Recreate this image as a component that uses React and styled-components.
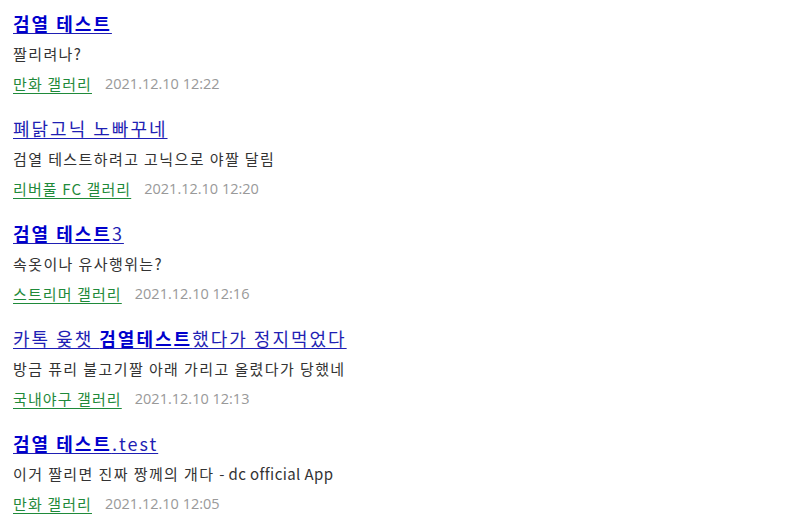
import React from 'react';
import styled, { createGlobalStyle } from 'styled-components';

const Global = createGlobalStyle`
  body {
    margin: 0;
    background: #fff;
    font-family: "Noto Sans CJK KR", "Noto Sans", sans-serif;
  }
`;

const List = styled.div`
  display: flex;
  flex-direction: column;
  gap: 15px;
  padding: 8px 13px;
`;

const Item = styled.div`
  display: flex;
  flex-direction: column;
`;

const Title = styled.a`
  font-size: 18px;
  line-height: 30px;
  letter-spacing: 2px;
  color: #1f1fb4;
  text-decoration: underline;
  text-decoration-thickness: 1px;
  text-underline-offset: 2px;
  b {
    font-weight: 700;
    color: #0000cc;
  }
`;

const Desc = styled.div`
  font-size: 15px;
  line-height: 30px;
  margin-top: 1px;
  letter-spacing: 1.4px;
  color: #333;
`;

const Latin = styled.span`
  letter-spacing: 0.4px;
`;

const Meta = styled.div`
  display: flex;
  align-items: center;
  gap: 13px;
  margin-top: 1px;
  font-size: 15px;
  line-height: 28px;
`;

const Gallery = styled.a`
  color: #1f8a3a;
  letter-spacing: 1.1px;
  text-decoration: underline;
  text-decoration-thickness: 1px;
  text-underline-offset: 3px;
`;

const Date = styled.span`
  color: #999;
  font-size: 14.5px;
  font-family: "Open Sans", "Noto Sans", sans-serif;
`;

const items = [
  { title: [['b', '검열 테스트']], desc: ['짤리려나?'], gallery: '만화 갤러리', date: '2021.12.10 12:22' },
  { title: [['t', '폐닭고닉 노빠꾸네']], desc: ['검열 테스트하려고 고닉으로 야짤 달림'], gallery: '리버풀 FC 갤러리', date: '2021.12.10 12:20' },
  { title: [['b', '검열 테스트'], ['t', '3']], desc: ['속옷이나 유사행위는?'], gallery: '스트리머 갤러리', date: '2021.12.10 12:16' },
  { title: [['t', '카톡 윶챗 '], ['b', '검열테스트'], ['t', '했다가 정지먹었다']], desc: ['방금 퓨리 불고기짤 아래 가리고 올렸다가 당했네'], gallery: '국내야구 갤러리', date: '2021.12.10 12:13' },
  { title: [['b', '검열 테스트'], ['t', '.test']], desc: ['이거 짤리면 진짜 짱께의 개다 ', '- dc official App'], gallery: '만화 갤러리', date: '2021.12.10 12:05' },
];

export default function App() {
  return (
    <>
      <Global />
      <List>
        {items.map((it, i) => (
          <Item key={i}>
            <div>
              <Title href="#">
                {it.title.map(([k, s], j) => (k === 'b' ? <b key={j}>{s}</b> : <span key={j}>{s}</span>))}
              </Title>
            </div>
            <Desc>
              {it.desc[0]}
              {it.desc[1] && <Latin>{it.desc[1]}</Latin>}
            </Desc>
            <Meta>
              <Gallery href="#">{it.gallery}</Gallery>
              <Date>{it.date}</Date>
            </Meta>
          </Item>
        ))}
      </List>
    </>
  );
}
